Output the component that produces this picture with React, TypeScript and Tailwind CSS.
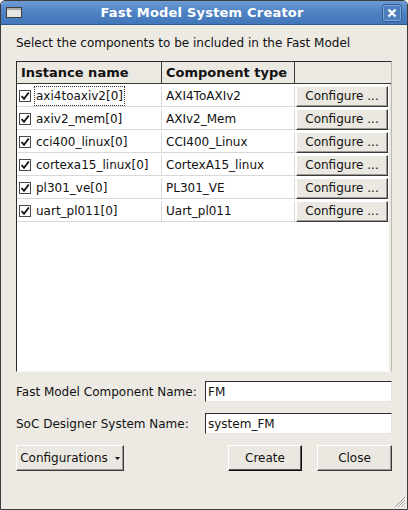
import React from "react";

const rows = [
  ["axi4toaxiv2[0]", "AXI4ToAXIv2"],
  ["axiv2_mem[0]", "AXIv2_Mem"],
  ["cci400_linux[0]", "CCI400_Linux"],
  ["cortexa15_linux[0]", "CortexA15_linux"],
  ["pl301_ve[0]", "PL301_VE"],
  ["uart_pl011[0]", "Uart_pl011"],
];

function Check() {
  return (
    <div className="w-[12px] h-[12px] border border-[#4a4a4a] bg-white flex items-center justify-center shrink-0">
      <svg width="10" height="10" viewBox="0 0 10 10">
        <path d="M1.5 5 L4 7.8 L8.8 1.5" stroke="#111" strokeWidth="1.8" fill="none" />
      </svg>
    </div>
  );
}

function Btn({ children, className = "" }: { children: React.ReactNode; className?: string }) {
  return (
    <div
      className={
        "flex items-center justify-center bg-[#ebe8e2] border border-t-white border-l-white border-r-[#3a3a3a] border-b-[#3a3a3a] shadow-[inset_-1px_-1px_0_#9d9a94] whitespace-nowrap " +
        className
      }
    >
      {children}
    </div>
  );
}

export default function App() {
  return (
    <div
      className="w-[408px] h-[510px] bg-[#edeae4] border border-[#3b3b3b] flex flex-col text-[#111] text-[12px] leading-none overflow-hidden rounded-t-[5px]"
      style={{ fontFamily: '"DejaVu Sans", sans-serif' }}
    >
      <div className="h-[24px] shrink-0 bg-gradient-to-b from-[#6c9bd4] via-[#4f82c3] to-[#4177bb] border-b border-[#2e5a94] flex items-center px-[5px] relative">
        <div className="w-[16px] h-[11px] bg-[#e8e6e2] border border-[#3e3e3e] shadow-[inset_0_2px_0_#a9a9a9]" />
        <div className="flex-1 text-center text-white font-bold text-[13px] tracking-[0.2px]">Fast Model System Creator</div>
        <div className="w-[20px] h-[18px] rounded-[3px] border border-[#2f5d97] bg-[#4b7fc0] flex items-center justify-center shadow-[inset_0_0_0_1px_#7fa7d8]">
          <svg width="10" height="10" viewBox="0 0 10 10">
            <path d="M1.5 1.5 L8.5 8.5 M8.5 1.5 L1.5 8.5" stroke="white" strokeWidth="2.4" />
          </svg>
        </div>
      </div>

      <div className="flex-1 flex flex-col px-[15px]">
        <div className="mt-[12px] h-[13px] whitespace-nowrap text-[12px]">Select the components to be included in the Fast Model</div>

        <div className="mt-[11px] h-[311px] shrink-0 border border-[#2a2a2a] border-r-[#bdbab4] border-b-[#f8f8f8] bg-white flex flex-col">
          <div className="flex h-[22px] shrink-0 bg-[#ece9e3] border-b border-[#3a3a3a] font-bold text-[13px]">
            <div className="w-[145px] flex items-center pl-[4px] border-r border-[#3a3a3a]">Instance name</div>
            <div className="w-[133px] flex items-center pl-[4px] border-r border-[#3a3a3a]">Component type</div>
            <div className="flex-1" />
          </div>
          <div className="flex flex-1">
            <div className="flex-1 flex flex-col">
              {rows.map((r, i) => (
                <div key={i} className="flex h-[23px] pt-[2px] border-b border-[#d9d9d9]">
                  <div className="w-[145px] flex items-center pl-[2px] gap-[3px] border-r border-[#d9d9d9] whitespace-nowrap">
                    <Check />
                    <span className={"px-[1px] py-[3px] " + (i === 0 ? "border border-dotted border-[#333]" : "border border-transparent")}>{r[0]}</span>
                  </div>
                  <div className="w-[133px] flex items-center pl-[4px] border-r border-[#d9d9d9] whitespace-nowrap">{r[1]}</div>
                  <div className="flex-1 flex items-center pl-[1px] pr-[1px]">
                    <Btn className="w-[92px] h-[21px]">Configure ...</Btn>
                  </div>
                </div>
              ))}
            </div>
            <div className="w-[2px] bg-[#edeae4]" />
          </div>
        </div>

        <div className="mt-[9px] flex items-center h-[21px]">
          <div className="w-[189px] shrink-0 whitespace-nowrap pt-[1px]">Fast Model Component Name:</div>
          <div className="flex-1 h-[21px] bg-white border border-[#2a2a2a] border-r-[#e4e2de] border-b-[#e4e2de] flex items-center pl-[2px]">FM</div>
        </div>
        <div className="mt-[11px] flex items-center h-[21px]">
          <div className="w-[189px] shrink-0 whitespace-nowrap">SoC Designer System Name:</div>
          <div className="flex-1 h-[21px] bg-white border border-[#2a2a2a] border-r-[#e4e2de] border-b-[#e4e2de] flex items-center pl-[2px]">system_FM</div>
        </div>

        <div className="mt-[11px] flex items-center">
          <Btn className="w-[108px] h-[26px] gap-[7px]">
            <span>Configurations</span>
            <svg width="5" height="3" viewBox="0 0 5 3"><path d="M0 0 H5 L2.5 3 Z" fill="#111" /></svg>
          </Btn>
          <div className="flex-1" />
          <Btn className="w-[74px] h-[26px] border-r-[#111] border-b-[#111] shadow-[inset_-1px_-1px_0_#555]">Create</Btn>
          <Btn className="w-[75px] h-[26px] ml-[15px]">Close</Btn>
        </div>

        <div className="flex-1 flex justify-end items-end pb-[1px] -mr-[14px]">
          <svg width="12" height="12" viewBox="0 0 12 12">
            <path d="M11 1 L1 11 M11 4 L4 11 M11 7 L7 11 M11 10 L10 11" stroke="#a09d97" strokeWidth="1" />
            <path d="M12 2 L2 12 M12 5 L5 12 M12 8 L8 12" stroke="#ffffff" strokeWidth="1" />
          </svg>
        </div>
      </div>
    </div>
  );
}
